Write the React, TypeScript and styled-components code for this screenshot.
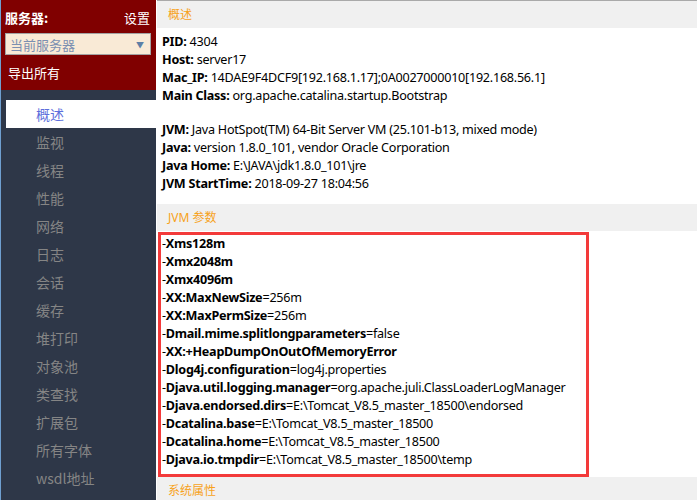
import React from 'react';
import styled, { createGlobalStyle } from 'styled-components';

const GlobalStyle = createGlobalStyle`
  html, body {
    margin: 0;
    padding: 0;
    background: #fff;
  }
  body {
    font-family: 'Noto Sans', 'Noto Sans CJK SC', sans-serif;
    font-size: 13px;
    color: #000;
  }
`;

const Page = styled.div`
  display: flex;
  width: 697px;
  height: 500px;
  overflow: hidden;
`;

const Sidebar = styled.aside`
  width: 155px;
  flex-shrink: 0;
  background: #2e3748;
  border-left: 1px solid #6f9fd0;
  font-family: 'Noto Sans CJK SC', sans-serif;
`;

const ServerPanel = styled.div`
  height: 90px;
  background: #800000;
  padding: 7px 5px 0 4px;
  box-sizing: border-box;
  color: #fff;
`;

const PanelHead = styled.div`
  display: flex;
  justify-content: space-between;
  align-items: center;
  height: 20px;
  font-size: 13px;
`;

const PanelLabel = styled.span`
  font-weight: bold;
`;

const SettingsLink = styled.span`
  font-size: 13px;
  padding-right: 1px;
`;

const ServerSelect = styled.div`
  margin-top: 6px;
  height: 22px;
  width: 146px;
  box-sizing: border-box;
  background: #f9ead6;
  border: 1px solid #a3a3a3;
  display: flex;
  align-items: center;
  justify-content: space-between;
  padding: 0 6px 0 4px;
  color: #7b8fb1;
  font-size: 13px;
`;

const Caret = styled.span`
  font-size: 8px;
  color: #5d7fa6;
`;

const ExportLink = styled.div`
  margin-top: 8px;
  padding-left: 3px;
  font-size: 13px;
`;

const NavList = styled.ul`
  list-style: none;
  margin: 0;
  padding: 10px 0 0 5px;
`;

const NavItem = styled.li<{ $active?: boolean }>`
  height: 28px;
  line-height: 28px;
  padding-left: 30px;
  font-size: 14px;
  background: ${({ $active }) => ($active ? '#fff' : 'transparent')};
  color: ${({ $active }) => ($active ? '#5d6fdc' : '#858585')};
`;

const Content = styled.main`
  flex: 1;
  margin-left: 1px;
  border-top: 1px solid #a9a9a9;
`;

const SectionTitle = styled.div`
  height: 27px;
  line-height: 27px;
  background: #f0f0f0;
  color: #f7a21b;
  font-size: 12px;
  padding-left: 11px;
`;

const InfoBlock = styled.div<{ $gap?: number }>`
  padding: 5px 5px 0 5px;
  margin-bottom: ${({ $gap }) => $gap ?? 0}px;
`;

const Line = styled.div`
  height: 18px;
  line-height: 18px;
  font-size: 12.6px;
  letter-spacing: -0.25px;
  white-space: nowrap;
`;

const Key = styled.b`
  font-weight: bold;
`;

const ParamBox = styled.div`
  width: 424px;
  margin: 1px 0 0 1px;
  border: 3px solid #f33a3a;
  padding: 0 0 5px 1px;
`;

const info = [
  ['PID', '4304'],
  ['Host', 'server17'],
  ['Mac_IP', '14DAE9F4DCF9[192.168.1.17];0A0027000010[192.168.56.1]'],
  ['Main Class', 'org.apache.catalina.startup.Bootstrap'],
];

const jvm = [
  ['JVM', 'Java HotSpot(TM) 64-Bit Server VM (25.101-b13, mixed mode)'],
  ['Java', 'version 1.8.0_101, vendor Oracle Corporation'],
  ['Java Home', 'E:\\JAVA\\jdk1.8.0_101\\jre'],
  ['JVM StartTime', '2018-09-27 18:04:56'],
];

const params: [string, string?][] = [
  ['Xms128m'],
  ['Xmx2048m'],
  ['Xmx4096m'],
  ['XX:MaxNewSize', '256m'],
  ['XX:MaxPermSize', '256m'],
  ['Dmail.mime.splitlongparameters', 'false'],
  ['XX:+HeapDumpOnOutOfMemoryError'],
  ['Dlog4j.configuration', 'log4j.properties'],
  ['Djava.util.logging.manager', 'org.apache.juli.ClassLoaderLogManager'],
  ['Djava.endorsed.dirs', 'E:\\Tomcat_V8.5_master_18500\\endorsed'],
  ['Dcatalina.base', 'E:\\Tomcat_V8.5_master_18500'],
  ['Dcatalina.home', 'E:\\Tomcat_V8.5_master_18500'],
  ['Djava.io.tmpdir', 'E:\\Tomcat_V8.5_master_18500\\temp'],
];

const navItems = [
  '概述', '监视', '线程', '性能', '网络', '日志', '会话', '缓存',
  '堆打印', '对象池', '类查找', '扩展包', '所有字体', 'wsdl地址',
];

export default function App() {
  return (
    <>
      <GlobalStyle />
      <Page>
        <Sidebar>
          <ServerPanel>
            <PanelHead>
              <PanelLabel>服务器:</PanelLabel>
              <SettingsLink>设置</SettingsLink>
            </PanelHead>
            <ServerSelect>
              <span>当前服务器</span>
              <Caret>▼</Caret>
            </ServerSelect>
            <ExportLink>导出所有</ExportLink>
          </ServerPanel>
          <NavList>
            {navItems.map((item, i) => (
              <NavItem key={item} $active={i === 0}>{item}</NavItem>
            ))}
          </NavList>
        </Sidebar>
        <Content>
          <SectionTitle>概述</SectionTitle>
          <InfoBlock $gap={11}>
            {info.map(([k, v]) => (
              <Line key={k}><Key>{k}:</Key> {v}</Line>
            ))}
          </InfoBlock>
          <InfoBlock $gap={11}>
            {jvm.map(([k, v]) => (
              <Line key={k}><Key>{k}:</Key> {v}</Line>
            ))}
          </InfoBlock>
          <SectionTitle>JVM 参数</SectionTitle>
          <ParamBox>
            {params.map(([k, v]) => (
              <Line key={k}>
                -<Key>{k}</Key>{v !== undefined && <>={v}</>}
              </Line>
            ))}
          </ParamBox>
          <SectionTitle>系统属性</SectionTitle>
        </Content>
      </Page>
    </>
  );
}
